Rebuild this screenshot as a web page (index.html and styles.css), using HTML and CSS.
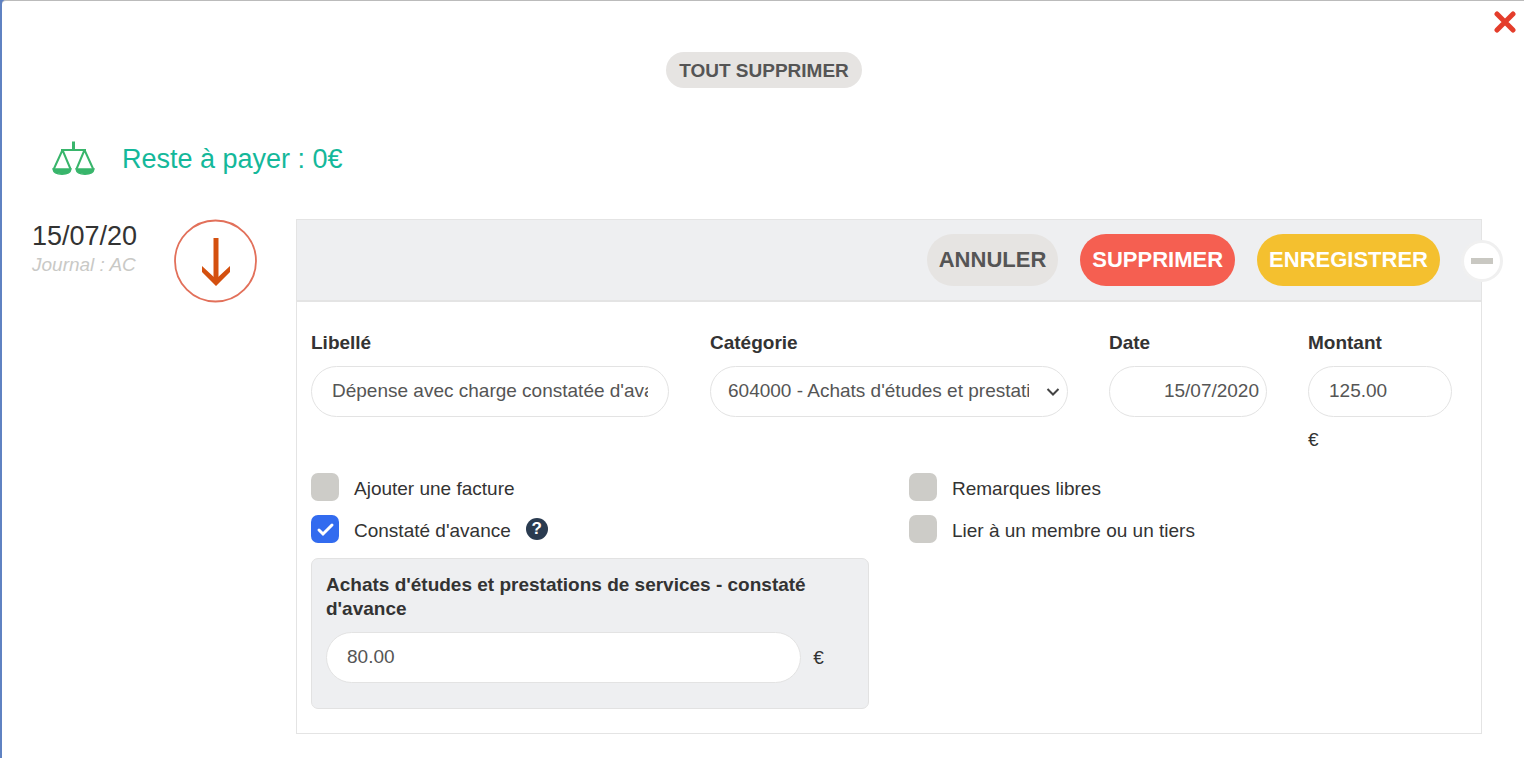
FILE: index.html
```
<!DOCTYPE html>
<html lang="fr">
<head>
    <meta charset="UTF-8">
    <meta name="viewport" content="width=device-width, initial-scale=1.0">
    <title>Reste à payer</title>
    <link rel="stylesheet" href="styles.css">
</head>
<body>
    <div class="modal">
        <button type="button" class="close" aria-label="Fermer">
            <svg width="22" height="22" viewBox="0 0 22 22"><path d="M3 3L19 19M19 3L3 19" stroke="#e43d2b" stroke-width="5" stroke-linecap="round"/></svg>
        </button>

        <div class="top-actions">
            <button type="button" class="button small">TOUT SUPPRIMER</button>
        </div>

        <div class="balance">
            <svg width="44" height="36" viewBox="0 0 44 36" fill="none" stroke="#38b56b">
                <path d="M21.500 0.500V9" stroke-width="3"/>
                <path d="M9 9H34" stroke-width="2"/>
                <path d="M10.500 9L1.800 28M10.500 9L18.500 28M32.500 9L24.500 28M32.500 9L41.200 28" stroke-width="2"/>
                <path d="M1 28H19C18.500 31.500 14.500 33.200 10 33.200S1.500 31.500 1 28ZM24 28H42C41.500 31.500 37.500 33.200 33 33.200S24.500 31.500 24 28Z" fill="#38b56b" stroke-width="1.500"/>
            </svg>
            <span>Reste à payer : 0€</span>
        </div>

        <div class="entry">
            <div class="entry-date">
                <div class="day">15/07/20</div>
                <div class="journal">Journal : AC</div>
            </div>
            <svg class="arrow" width="84" height="84" viewBox="0 0 84 84" fill="none">
                <circle cx="41.500" cy="42" r="40.500" stroke="#e2705a" stroke-width="1.800"/>
                <path d="M42 19V64" stroke="#d4500f" stroke-width="5"/>
                <path d="M28 47L42 60L56 47V53L42 67L28 53Z" fill="#d4500f"/>
            </svg>

            <form class="panel">
                <div class="panel-header">
                    <button type="button" class="button">ANNULER</button>
                    <button type="button" class="button red">SUPPRIMER</button>
                    <button type="button" class="button yellow">ENREGISTRER</button>
                    <button type="button" class="collapse" aria-label="Réduire"></button>
                </div>

                <div class="panel-body">
                    <div class="fields">
                        <div class="field">
                            <label for="libelle">Libellé</label>
                            <input type="text" id="libelle" value="Dépense avec charge constatée d'avance">
                        </div>
                        <div class="field">
                            <label for="categorie">Catégorie</label>
                            <div class="select">
                                <select id="categorie">
                                    <option>604000 - Achats d'études et prestations de services</option>
                                </select>
                                <svg width="14" height="10" viewBox="0 0 14 10"><path d="M1.500 2L7 7.500L12.500 2" fill="none" stroke="#444" stroke-width="2"/></svg>
                            </div>
                        </div>
                        <div class="field">
                            <label for="date">Date</label>
                            <input type="text" id="date" class="date" value="15/07/2020">
                        </div>
                        <div class="field">
                            <label for="montant">Montant</label>
                            <input type="text" id="montant" value="125.00">
                            <span class="currency">€</span>
                        </div>
                    </div>

                    <div class="options">
                        <div class="option-column">
                            <div class="option">
                                <input type="checkbox" id="facture">
                                <label for="facture">Ajouter une facture</label>
                            </div>
                            <div class="option">
                                <input type="checkbox" id="avance" checked>
                                <label for="avance">Constaté d'avance</label>
                                <button type="button" class="help" aria-label="Aide">?</button>
                            </div>
                            <div class="advance">
                                <label for="montant-avance">Achats d'études et prestations de services - constaté d'avance</label>
                                <div class="advance-amount">
                                    <input type="text" id="montant-avance" value="80.00">
                                    <span>€</span>
                                </div>
                            </div>
                        </div>
                        <div class="option-column">
                            <div class="option">
                                <input type="checkbox" id="remarques">
                                <label for="remarques">Remarques libres</label>
                            </div>
                            <div class="option">
                                <input type="checkbox" id="tiers">
                                <label for="tiers">Lier à un membre ou un tiers</label>
                            </div>
                        </div>
                    </div>
                </div>
            </form>
        </div>
    </div>
</body>
</html>
```
FILE: styles.css
```
* {
    box-sizing: border-box;
}
body {
    margin: 0;
    background: #5f82c2;
    font-family: "Liberation Sans", Arial, sans-serif;
    font-size: 19px;
    line-height: 24px;
    color: #333;
}
button, input, select {
    font-family: inherit;
    font-size: inherit;
}
.modal {
    position: relative;
    min-height: 100vh;
    margin-left: 2px;
    padding: 51px 42px 24px 30px;
    border-top: 1px solid #bbb;
    border-top-left-radius: 4px;
    background: #fff;
}
.close {
    position: absolute;
    top: 10px;
    right: 8px;
    padding: 0;
    border: none;
    background: none;
    cursor: pointer;
}
.close svg, .arrow, .balance svg {
    display: block;
}
.top-actions {
    display: flex;
    justify-content: center;
    padding-left: 14px;
}
.button {
    height: 52px;
    padding: 0 12px;
    border: none;
    border-radius: 26px;
    background: #e6e4e2;
    color: #555;
    font-size: 22px;
    font-weight: bold;
    cursor: pointer;
}
.button.small {
    height: 36px;
    padding: 2px 13px 0;
    font-size: 19px;
}
.button.red {
    background: #f55f51;
    color: #fff;
}
.button.yellow {
    background: #f4c02f;
    color: #fff;
}
.balance {
    display: flex;
    align-items: center;
    gap: 26px;
    margin: 53px 0 42px 20px;
    color: #14b89a;
    font-size: 27px;
    line-height: 36px;
}
.entry {
    display: flex;
    align-items: flex-start;
}
.entry-date {
    width: 142px;
    white-space: nowrap;
}
.day {
    font-size: 27px;
    line-height: 34px;
}
.journal {
    color: #c9c9c6;
    font-style: italic;
}
.arrow {
    flex: none;
    margin-right: 38px;
}
.panel {
    flex: 1;
    min-width: 0;
    border: 1px solid #e4e4e4;
}
.panel-header {
    position: relative;
    display: flex;
    justify-content: flex-end;
    gap: 22px;
    padding: 14px 41px 14px 14px;
    border-bottom: 2px solid #e4e4e4;
    background: #eeeff1;
}
.collapse {
    position: absolute;
    top: 20px;
    right: -22px;
    display: flex;
    align-items: center;
    justify-content: center;
    width: 42px;
    height: 42px;
    padding: 0;
    border: 3px solid #f0f0f0;
    border-radius: 50%;
    background: #fff;
    cursor: pointer;
}
.collapse::before {
    content: "";
    width: 22px;
    height: 6px;
    background: #c9c8c2;
}
.panel-body {
    padding: 29px 14px 24px;
}
.fields {
    display: grid;
    grid-template-columns: 358fr 358fr 158fr 144fr;
    gap: 41px;
    padding-right: 15px;
}
.field {
    min-width: 0;
}
.field label {
    display: block;
    margin-bottom: 11px;
    font-weight: bold;
}
input[type="text"], select {
    display: block;
    width: 100%;
    height: 51px;
    padding: 0 20px 2px;
    border: 1px solid #e3e3e3;
    border-radius: 26px;
    background: #fff;
    color: #555;
}
input.date {
    padding: 0 7px 2px;
    text-align: right;
}
.select {
    position: relative;
}
select {
    appearance: none;
    padding: 0 38px 2px 17px;
}
.select svg {
    position: absolute;
    top: 21px;
    right: 8px;
    pointer-events: none;
}
.currency {
    display: block;
    margin-top: 11px;
}
.options {
    display: grid;
    grid-template-columns: 1fr 1fr;
    gap: 40px;
    margin-top: 21px;
}
.option {
    display: flex;
    align-items: center;
    height: 28px;
    margin-bottom: 14px;
}
.option label {
    padding-top: 4px;
}
input[type="checkbox"] {
    appearance: none;
    width: 28px;
    height: 28px;
    margin: 0 15px 0 0;
    border-radius: 7px;
    background: #cdccc8;
}
input[type="checkbox"]:checked {
    background: #326bef url("data:image/svg+xml,%3Csvg xmlns='http://www.w3.org/2000/svg' viewBox='0 0 28 28'%3E%3Cpath d='M8 15L12 19L21 10' fill='none' stroke='white' stroke-width='3' stroke-linecap='round'/%3E%3C/svg%3E");
}
.help {
    width: 22px;
    height: 22px;
    margin-left: 15px;
    padding: 0;
    border: none;
    border-radius: 50%;
    background: #2a3b50;
    color: #fff;
    font-size: 17px;
    font-weight: bold;
    line-height: 22px;
}
.advance {
    margin-top: 15px;
    padding: 14px 14px 25px;
    border: 1px solid #e2e2e2;
    border-radius: 7px;
    background: #eeeff1;
}
.advance label {
    display: block;
    font-weight: bold;
}
.advance-amount {
    display: flex;
    align-items: center;
    gap: 12px;
    margin-top: 11px;
}
.advance-amount input[type="text"] {
    width: 90%;
}
```
